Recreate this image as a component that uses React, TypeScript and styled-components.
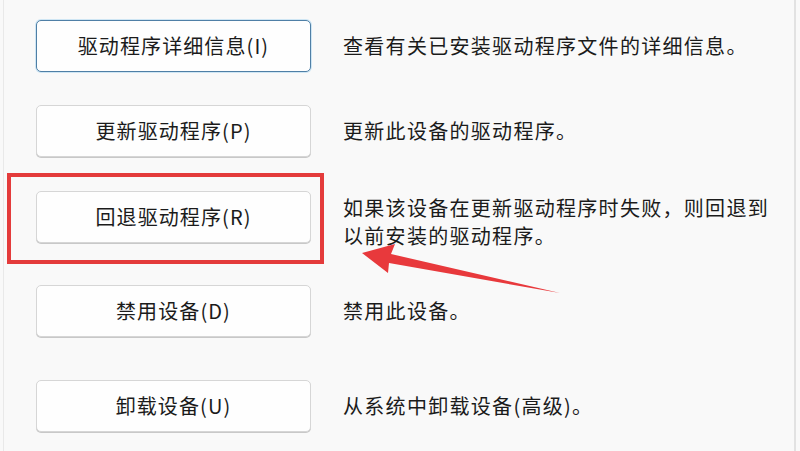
import React from "react";
import styled, { createGlobalStyle } from "styled-components";

const GlobalStyle = createGlobalStyle`
  html, body {
    margin: 0;
    padding: 0;
    background: #f9f9f9;
  }
  body {
    font-family: "Noto Sans CJK SC", "Noto Sans", sans-serif;
    color: #1b1b1b;
  }
`;

const Page = styled.main`
  position: relative;
  width: 800px;
  height: 451px;
  overflow: hidden;
  background-color: #f9f9f9;
  padding: 0 4px 0 3px;
  box-sizing: border-box;
`;

const Panel = styled.section`
  height: 100%;
  border-left: 1px solid #e9e9e9;
  border-right: 2px solid #e2e2e2;
  box-sizing: border-box;
  display: flex;
  flex-direction: column;
  padding-left: 32px;
`;

const Row = styled.div<{ $space: number }>`
  display: flex;
  align-items: center;
  gap: 32px;
  height: 52px;
  flex-shrink: 0;
  margin-top: ${({ $space }) => $space}px;
`;

const ActionButton = styled.button<{ $focused?: boolean }>`
  width: 275px;
  height: 52px;
  flex-shrink: 0;
  border-radius: 5px;
  background-color: #fefefe;
  border: 1px solid ${({ $focused }) => ($focused ? "#4f7fa6" : "#d6d6d6")};
  box-shadow: ${({ $focused }) =>
    $focused ? "0 0 0 1px #cfe6f4" : "0 1px 0 #c8c8c8"};
  font-family: "Noto Sans CJK SC", "Noto Sans", sans-serif;
  font-size: 20px;
  letter-spacing: 1.1px;
  color: #1b1b1b;
  padding: 0 0 2px;
  cursor: pointer;
`;

const Description = styled.p<{ $shift?: number }>`
  margin: 0;
  padding-top: ${({ $shift }) => $shift ?? 0}px;
  max-width: 430px;
  font-size: 20px;
  line-height: 28px;
  letter-spacing: 1.3px;
  color: #1b1b1b;
`;

const Highlight = styled.div`
  position: absolute;
  left: 7px;
  top: 173px;
  width: 317px;
  height: 91px;
  border: 4px solid #e43b3b;
  box-sizing: border-box;
  pointer-events: none;
`;

const Arrow = styled.svg`
  position: absolute;
  left: 0;
  top: 0;
  pointer-events: none;
`;

type Action = {
  label: string;
  text: string;
  space: number;
  focused?: boolean;
  shift?: number;
};

const actions: Action[] = [
  { label: "驱动程序详细信息(I)", text: "查看有关已安装驱动程序文件的详细信息。", space: 20, focused: true },
  { label: "更新驱动程序(P)", text: "更新此设备的驱动程序。", space: 33 },
  {
    label: "回退驱动程序(R)",
    text: "如果该设备在更新驱动程序时失败，则回退到以前安装的驱动程序。",
    space: 34,
    shift: 10,
  },
  { label: "禁用设备(D)", text: "禁用此设备。", space: 42 },
  { label: "卸载设备(U)", text: "从系统中卸载设备(高级)。", space: 43 },
];

const App = () => {
  return (
    <>
      <GlobalStyle />
      <Page>
        <Panel>
          {actions.map((a) => (
            <Row key={a.label} $space={a.space}>
              <ActionButton $focused={a.focused}>{a.label}</ActionButton>
              <Description $shift={a.shift}>{a.text}</Description>
            </Row>
          ))}
        </Panel>
        <Highlight />
        <Arrow width="800" height="451" viewBox="0 0 800 451">
          <polygon
            points="362,253 395,244 391,254 560,293 389,263 388,273"
            fill="#e8393c"
          />
        </Arrow>
      </Page>
    </>
  );
};

export default App;
